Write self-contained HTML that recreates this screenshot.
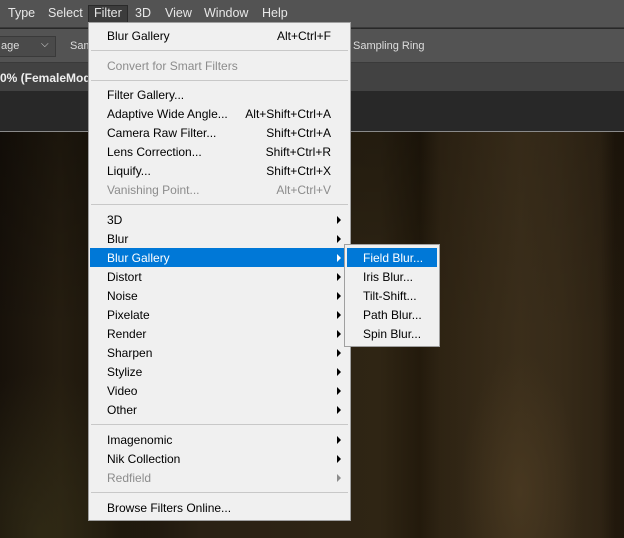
<!DOCTYPE html>
<html><head><style>
*{margin:0;padding:0;box-sizing:border-box}
body{width:624px;height:538px;overflow:hidden;position:relative;background:#282828;font-family:"Liberation Sans",sans-serif;font-size:12px}
.a{position:absolute;white-space:nowrap}
.mb{left:0;top:0;width:624px;height:28px;background:#535353;border-bottom:1px solid #3a3a3a}
.mb span{position:absolute;top:6px;color:#e8e8e8;font-size:12.5px}
.tb{left:0;top:29px;width:624px;height:34px;background:#535353;border-bottom:1px solid #3a3a3a}
.tab{left:0;top:63px;width:624px;height:28px;background:#424242}
.cv{left:0;top:131px;width:624px;height:407px;border-top:1px solid #8a8a8a;
background:
radial-gradient(ellipse 60px 140px at 520px 360px,rgba(80,62,36,.6),transparent),
linear-gradient(90deg,transparent 420px,rgba(55,43,25,.5) 440px,rgba(68,54,32,.6) 520px,rgba(55,43,25,.5) 600px,rgba(30,22,10,.3) 615px),
radial-gradient(ellipse 120px 160px at 40px 400px,rgba(55,50,25,.6),transparent),
radial-gradient(ellipse 90px 60px at 120px 520px,rgba(120,25,20,.6),transparent),
linear-gradient(180deg,rgba(0,0,0,.25),transparent 200px),
linear-gradient(90deg,#17110a 0,#251d10 60px,#19130a 120px,#2a2114 200px,#2f2514 380px,#231a0c 420px,#2e2314 560px,#21180c 624px)}
.m{left:88px;top:22px;width:263px;height:499px;background:#f0f0f0;border:1px solid #a0a0a0}
.it{position:absolute;left:18px;height:19px;line-height:21px;color:#000;font-size:12px;width:240px}
.it.d{color:#8c8c8c}
.it .k{position:absolute;right:16px;top:0}
.it .ar{position:absolute;right:6px;top:6px;width:0;height:0;border-left:4px solid #000;border-top:4px solid transparent;border-bottom:4px solid transparent}
.it.d .ar{border-left-color:#8c8c8c}
.sep{position:absolute;left:2px;width:257px;height:1px;background:#c8c8c8}
.hl{position:absolute;left:1px;top:225px;width:258px;height:19px;background:#0078d7}
.sm{left:344px;top:244px;width:96px;height:103px;background:#f0f0f0;border:1px solid #a0a0a0}
.sm div{position:absolute;left:18px;height:19px;line-height:21px;font-size:12px;color:#000}
</style></head><body>
<div class="a mb">
<span style="left:8px">Type</span><span style="left:48px">Select</span>
<div class="a" style="left:88px;top:5px;width:40px;height:18px;background:#3c3c3c;border:1px solid #2a2a2a"></div>
<span style="left:94px">Filter</span><span style="left:135px">3D</span><span style="left:165px">View</span><span style="left:204px">Window</span><span style="left:262px">Help</span>
</div>
<div class="a tb">
<div class="a" style="left:-2px;top:7px;width:58px;height:21px;border:1px solid #3a3a3a;background:#4a4a4a;color:#ddd;padding:3px 0 0 2px;font-size:11px">age<span style="position:absolute;left:42px;top:2px;font-size:10px">⌵</span></div>
<span class="a" style="left:70px;top:11px;color:#ddd;font-size:11px">Sam</span>
<span class="a" style="left:353px;top:11px;color:#ddd;font-size:11px">Sampling Ring</span>
</div>
<div class="a tab"><span class="a" style="left:0;top:8px;color:#eee;font-weight:bold;font-size:12px">0% (FemaleMode</span></div>
<div class="a cv"></div>
<div class="a m">
<div class="hl"></div>
<div class="it" style="top:3px">Blur Gallery<span class="k">Alt+Ctrl+F</span></div>
<div class="sep" style="top:27px"></div>
<div class="it d" style="top:33px">Convert for Smart Filters</div>
<div class="sep" style="top:57px"></div>
<div class="it" style="top:62px">Filter Gallery...</div>
<div class="it" style="top:81px">Adaptive Wide Angle...<span class="k">Alt+Shift+Ctrl+A</span></div>
<div class="it" style="top:100px">Camera Raw Filter...<span class="k">Shift+Ctrl+A</span></div>
<div class="it" style="top:119px">Lens Correction...<span class="k">Shift+Ctrl+R</span></div>
<div class="it" style="top:138px">Liquify...<span class="k">Shift+Ctrl+X</span></div>
<div class="it d" style="top:157px">Vanishing Point...<span class="k">Alt+Ctrl+V</span></div>
<div class="sep" style="top:181px"></div>
<div class="it" style="top:187px">3D<span class="ar"></span></div>
<div class="it" style="top:206px">Blur<span class="ar"></span></div>
<div class="it" style="top:225px;color:#fff">Blur Gallery<span class="ar" style="border-left-color:#fff"></span></div>
<div class="it" style="top:244px">Distort<span class="ar"></span></div>
<div class="it" style="top:263px">Noise<span class="ar"></span></div>
<div class="it" style="top:282px">Pixelate<span class="ar"></span></div>
<div class="it" style="top:301px">Render<span class="ar"></span></div>
<div class="it" style="top:320px">Sharpen<span class="ar"></span></div>
<div class="it" style="top:339px">Stylize<span class="ar"></span></div>
<div class="it" style="top:358px">Video<span class="ar"></span></div>
<div class="it" style="top:377px">Other<span class="ar"></span></div>
<div class="sep" style="top:401px"></div>
<div class="it" style="top:407px">Imagenomic<span class="ar"></span></div>
<div class="it" style="top:426px">Nik Collection<span class="ar"></span></div>
<div class="it d" style="top:445px">Redfield<span class="ar"></span></div>
<div class="sep" style="top:469px"></div>
<div class="it" style="top:475px">Browse Filters Online...</div>
</div>
<div class="a sm">
<div style="left:2px;top:3px;width:90px;background:#0078d7"></div>
<div style="top:3px;color:#fff">Field Blur...</div>
<div style="top:22px">Iris Blur...</div>
<div style="top:41px">Tilt-Shift...</div>
<div style="top:60px">Path Blur...</div>
<div style="top:79px">Spin Blur...</div>
</div>
</body></html>
